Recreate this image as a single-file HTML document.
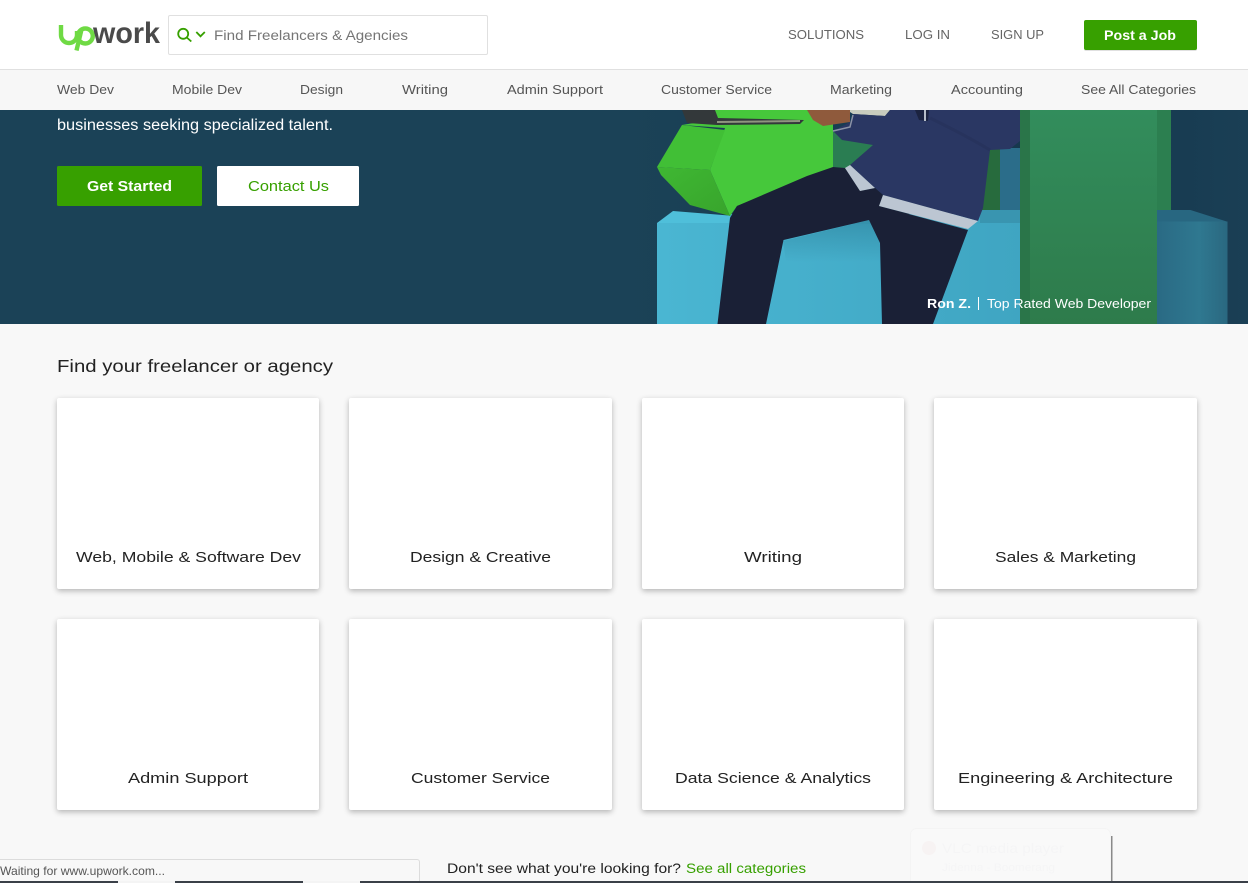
<!DOCTYPE html>
<html lang="en"><head><meta charset="utf-8"><title>Upwork</title>
<style>
html,body{margin:0;padding:0;width:1248px;height:883px;overflow:hidden;background:#f8f8f8}
.c{position:absolute;background:#fff;border-radius:2px;box-shadow:0 2px 6px rgba(0,0,0,.28)}
svg{position:absolute;left:0;top:0}
text{font-family:"Liberation Sans",sans-serif}
</style></head><body>
<div class="c" style="left:57px;top:398px;width:262px;height:191px"></div>
<div class="c" style="left:349px;top:398px;width:263px;height:191px"></div>
<div class="c" style="left:642px;top:398px;width:262px;height:191px"></div>
<div class="c" style="left:934px;top:398px;width:263px;height:191px"></div>
<div class="c" style="left:57px;top:619px;width:262px;height:191px"></div>
<div class="c" style="left:349px;top:619px;width:263px;height:191px"></div>
<div class="c" style="left:642px;top:619px;width:262px;height:191px"></div>
<div class="c" style="left:934px;top:619px;width:263px;height:191px"></div>
<svg width="1248" height="883" viewBox="0 0 1248 883" xmlns="http://www.w3.org/2000/svg">
<defs>
<linearGradient id="hero" x1="0" x2="1" y1="0" y2="0"><stop offset="0" stop-color="#1b4257"/><stop offset=".5" stop-color="#1b4257"/><stop offset=".86" stop-color="#15374d"/><stop offset="1" stop-color="#1a3f55"/></linearGradient>
<linearGradient id="pil" x1="0" x2="0" y1="0" y2="1"><stop offset="0" stop-color="#328d5c"/><stop offset="1" stop-color="#2e7b4b"/></linearGradient>
<linearGradient id="blk" x1="0" x2="1" y1="0" y2="0"><stop offset="0" stop-color="#4ab6d2"/><stop offset="1" stop-color="#3fa5c2"/></linearGradient>
<linearGradient id="rb" x1="0" x2="1" y1="0" y2="0"><stop offset="0" stop-color="#2a6a84"/><stop offset=".6" stop-color="#2f7890"/><stop offset="1" stop-color="#2a6880"/></linearGradient>
<linearGradient id="dk" x1="0" x2="1" y1="0" y2="1"><stop offset="0" stop-color="#3fb833"/><stop offset="1" stop-color="#38a42c"/></linearGradient>
<linearGradient id="sh" x1="0" x2="0" y1="0" y2="1"><stop offset="0" stop-color="#2c7f98" stop-opacity=".55"/><stop offset="1" stop-color="#2c7f98" stop-opacity="0"/></linearGradient>
</defs>
<!-- header -->
<rect x="0" y="0" width="1248" height="69" fill="#fff"/>
<rect x="0" y="69" width="1248" height="1" fill="#e0e0e0"/>
<rect x="0" y="70" width="1248" height="40" fill="#f7f7f7"/>
<!-- logo -->
<g fill="none" stroke="#6fda44" stroke-width="4.400">
<path d="M61 25V35A8 8 0 0 0 77 35V31"/>
<circle cx="85.300" cy="36" r="7.500"/>
<path d="M81.500 29.500L76.500 50.500"/>
</g>
<text x="93" y="43" font-size="30" font-weight="700" fill="#4a4a4a" textLength="67" lengthAdjust="spacingAndGlyphs">work</text>
<!-- search -->
<rect x="168.500" y="15.500" width="319" height="39" rx="1.500" fill="#fff" stroke="#e0e0e0"/>
<circle cx="183.200" cy="33.800" r="5" fill="none" stroke="#37a000" stroke-width="1.800"/>
<path d="M186.800 37.500L191.300 41.500M196.300 32L200.500 36.300L204.800 32" fill="none" stroke="#37a000" stroke-width="1.800"/>
<text x="214" y="40" font-size="13.500" fill="#757575" textLength="194" lengthAdjust="spacingAndGlyphs">Find Freelancers &amp; Agencies</text>
<g font-size="13" fill="#656565">
<text x="788" y="39" textLength="76" lengthAdjust="spacingAndGlyphs">SOLUTIONS</text>
<text x="905" y="39" textLength="45" lengthAdjust="spacingAndGlyphs">LOG IN</text>
<text x="991" y="39" textLength="53" lengthAdjust="spacingAndGlyphs">SIGN UP</text>
</g>
<rect x="1084" y="21" width="113" height="30" rx="2" fill="#000" opacity=".12"/>
<rect x="1084" y="20" width="113" height="30" rx="2" fill="#37a000"/>
<text x="1104" y="40" font-size="13.500" font-weight="700" fill="#fff" textLength="72" lengthAdjust="spacingAndGlyphs">Post a Job</text>
<!-- nav -->
<g font-size="13" fill="#555">
<text x="57" y="94" textLength="57" lengthAdjust="spacingAndGlyphs">Web Dev</text>
<text x="172" y="94" textLength="70" lengthAdjust="spacingAndGlyphs">Mobile Dev</text>
<text x="300" y="94" textLength="43" lengthAdjust="spacingAndGlyphs">Design</text>
<text x="402" y="94" textLength="46" lengthAdjust="spacingAndGlyphs">Writing</text>
<text x="507" y="94" textLength="96" lengthAdjust="spacingAndGlyphs">Admin Support</text>
<text x="661" y="94" textLength="111" lengthAdjust="spacingAndGlyphs">Customer Service</text>
<text x="830" y="94" textLength="62" lengthAdjust="spacingAndGlyphs">Marketing</text>
<text x="951" y="94" textLength="72" lengthAdjust="spacingAndGlyphs">Accounting</text>
<text x="1081" y="94" textLength="115" lengthAdjust="spacingAndGlyphs">See All Categories</text>
</g>
<!-- hero -->
<rect x="0" y="110" width="1248" height="214" fill="url(#hero)"/>
<!-- back pieces -->
<polygon points="833,130 875,140 875,170 833,170" fill="#2a7d52"/>
<rect x="980" y="148" width="21" height="64" fill="#276b3d"/>
<rect x="1000" y="148" width="21" height="64" fill="#2b6d8a"/>
<!-- blue block -->
<polygon points="657,223 673,211 735,216 735,224 657,224" fill="#4fbfda"/>
<polygon points="975,210 1021,210 1021,224 975,224" fill="#3995b0"/>
<rect x="657" y="223" width="364" height="101" fill="url(#blk)"/>
<rect x="730" y="214" width="250" height="10" fill="#3fa5c2"/>
<polygon points="783,241 869,220 880,243 880,262 786,262" fill="url(#sh)"/>
<!-- right block -->
<polygon points="1157,210 1190.500,210 1227.500,221.700 1227.500,224 1157,224" fill="#286781"/>
<rect x="1157" y="221.500" width="70.500" height="102.500" fill="url(#rb)"/>
<!-- hexagon -->
<polygon points="715,110 833,110 833,168 807,178 737,206 730,216 710,170 725,128 682,125 700,122" fill="#46c83b"/>
<polygon points="682,125 725,130 710,170 657,167" fill="#41bf36"/>
<polygon points="657,167 710,170 730,216 690,205 661,175" fill="url(#dk)"/>
<!-- pillar -->
<rect x="1157" y="110" width="14" height="100" fill="#2c7f50"/>
<rect x="1020" y="110" width="137" height="214" fill="url(#pil)"/>
<rect x="1020" y="110" width="10" height="214" fill="#2a7549"/>
<!-- laptop, hand, book -->
<polygon points="682,110 687,123 717,125 800,124 804,120 718,118 715,110" fill="#33383a"/>
<polygon points="717,121 800,120 800,122 717,123" fill="#8f957f"/>
<polygon points="847,110 890,110 885,116 853,114" fill="#c8ccbe"/>
<polygon points="807,110 850,110 850,122 823,126 813,120" fill="#8f5a3c"/>
<!-- sweater -->
<polygon points="853,114 885,116 890,110 1020,110 1020,141 1010,149 990,150 983,208 978,221 883,195 875,188 850,165 873,145 842,140 833,131 850,122" fill="#2a3763"/>
<path d="M833 131L850 127L853 115" fill="none" stroke="#8b93a6" stroke-width="1.500"/>
<path d="M915 110L919 120L928 121L929 110Z" fill="#1b2340"/>
<path d="M925 110V121" stroke="#b6bdc8" stroke-width="2"/>
<path d="M930 118Q965 135 990 150" fill="none" stroke="#27335d" stroke-width="3"/>
<!-- pants -->
<polygon points="833,167 807,176 737,206 730,218 717.500,324 766,324 783.500,240 869,220 880,243 882,324 933,324 968,230 879,206 883,195 875,188 860,191 845,168" fill="#1a2036"/>
<!-- shirt -->
<polygon points="845,168 860,191 875,188 850,165" fill="#bcc6d2"/>
<polygon points="883,195 879,206 968,229 978,221" fill="#bcc6d2"/>
<text x="57" y="130" font-size="15.500" fill="#fff" textLength="276" lengthAdjust="spacingAndGlyphs">businesses seeking specialized talent.</text>
<rect x="57" y="166" width="145" height="40" rx="1.500" fill="#37a000"/>
<text x="87" y="191" font-size="14.500" font-weight="700" fill="#fff" textLength="85" lengthAdjust="spacingAndGlyphs">Get Started</text>
<rect x="217" y="166" width="142" height="40" rx="1.500" fill="#fff"/>
<text x="248" y="191" font-size="14.500" fill="#37a000" textLength="81" lengthAdjust="spacingAndGlyphs">Contact Us</text>
<text x="927" y="308" font-size="13" font-weight="700" fill="#fff" textLength="44" lengthAdjust="spacingAndGlyphs">Ron Z.</text>
<rect x="978" y="297" width="1" height="13" fill="#fff"/>
<text x="987" y="308" font-size="13" fill="#fff" textLength="164" lengthAdjust="spacingAndGlyphs">Top Rated Web Developer</text>
<!-- main -->
<text x="57" y="372" font-size="17.500" fill="#222" textLength="276" lengthAdjust="spacingAndGlyphs">Find your freelancer or agency</text>
<g font-size="15" fill="#222">
<text x="76" y="562" textLength="225" lengthAdjust="spacingAndGlyphs">Web, Mobile &amp; Software Dev</text>
<text x="410" y="562" textLength="141" lengthAdjust="spacingAndGlyphs">Design &amp; Creative</text>
<text x="744" y="562" textLength="58" lengthAdjust="spacingAndGlyphs">Writing</text>
<text x="995" y="562" textLength="141" lengthAdjust="spacingAndGlyphs">Sales &amp; Marketing</text>
<text x="128" y="783" textLength="120" lengthAdjust="spacingAndGlyphs">Admin Support</text>
<text x="411" y="783" textLength="139" lengthAdjust="spacingAndGlyphs">Customer Service</text>
<text x="675" y="783" textLength="196" lengthAdjust="spacingAndGlyphs">Data Science &amp; Analytics</text>
<text x="958" y="783" textLength="215" lengthAdjust="spacingAndGlyphs">Engineering &amp; Architecture</text>
</g>
<text x="447" y="873" font-size="13.500" fill="#222" textLength="234" lengthAdjust="spacingAndGlyphs">Don't see what you're looking for?</text>
<text x="686" y="873" font-size="13.500" fill="#37a000" textLength="120" lengthAdjust="spacingAndGlyphs">See all categories</text>
<!-- VLC toast -->
<rect x="1110" y="836" width="2.500" height="46" fill="#8a8a8a"/>
<rect x="910.500" y="828.500" width="200" height="60" rx="6" fill="#f9f9f9" stroke="#f4f4f4"/>
<circle cx="929" cy="848" r="7" fill="#f7f3f3"/>
<text x="942" y="853" font-size="14" fill="#f5f5f6" textLength="122" lengthAdjust="spacingAndGlyphs">VLC media player</text>
<text x="942" y="871" font-size="11" fill="#f5f5f6" textLength="113" lengthAdjust="spacingAndGlyphs">Jidenna - Boomerang</text>
<!-- status bubble -->
<path d="M-1 859.500H417a2.500 2.500 0 0 1 2.500 2.500V884H-1Z" fill="#f8f8f8" stroke="#dcdcdc"/>
<text x="0" y="875" font-size="12" fill="#555" textLength="165" lengthAdjust="spacingAndGlyphs">Waiting for www.upwork.com...</text>
<!-- taskbar sliver -->
<rect x="0" y="881" width="1248" height="2" fill="#3a4048"/>
<rect x="118" y="881" width="57" height="2" fill="#f4f4f4"/>
<rect x="303" y="881" width="57" height="2" fill="#f4f4f4"/>
</svg>
</body></html>
